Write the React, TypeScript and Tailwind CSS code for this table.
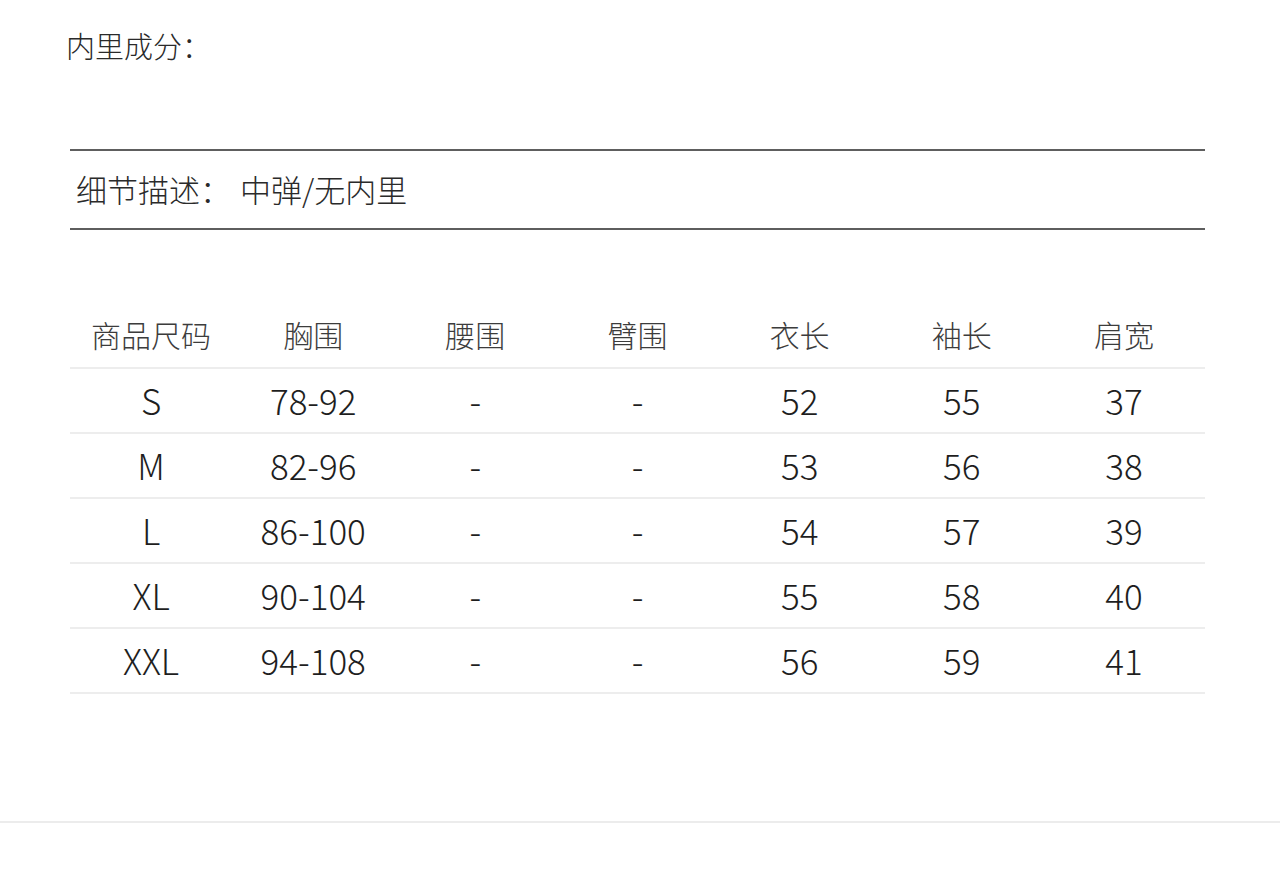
const headers = ["商品尺码", "胸围", "腰围", "臂围", "衣长", "袖长", "肩宽"];

const rows = [
	["S", "78-92", "-", "-", "52", "55", "37"],
	["M", "82-96", "-", "-", "53", "56", "38"],
	["L", "86-100", "-", "-", "54", "57", "39"],
	["XL", "90-104", "-", "-", "55", "58", "40"],
	["XXL", "94-108", "-", "-", "56", "59", "41"],
];

export default function App() {
	return (
		<div
			className="w-[1280px] h-[883px] bg-white text-[#222] font-light"
			style={{ fontFamily: '"Noto Sans CJK SC", "Noto Sans", sans-serif' }}
		>
			{/* Lining */}
			<div className="pt-[25px] pl-[66px] h-[65px] text-[29px] leading-[40px] text-[#2a2a2a]">
				内里成分：
			</div>

			<div className="ml-[70px] w-[1135px] mt-[84px]">
				{/* Detail */}
				<div className="h-[2px] bg-[#5e5e5e]" />
				<div className="h-[77px] flex items-center pl-[6px] text-[31px] text-[#2a2a2a]">
					<span>细节描述：</span>
					<span className="ml-[9px]">中弹/无内里</span>
				</div>
				<div className="h-[2px] bg-[#5e5e5e]" />

				{/* Size table */}
				<div className="mt-[74px]">
					<div className="grid grid-cols-7 h-[65px] pb-[4px] items-center border-b-2 border-[#ededed] text-[30px] text-[#3c3c3c]">
						{headers.map((h) => (
							<div key={h} className="text-center leading-none">
								{h}
							</div>
						))}
					</div>
					{rows.map((r) => (
						<div
							key={r[0]}
							className="grid grid-cols-7 h-[65px] pb-[2px] items-center border-b-2 border-[#ededed] text-[35px] text-[#1e1e1e]"
						>
							{r.map((c, i) => (
								<div key={i} className="text-center leading-none">
									{c}
								</div>
							))}
						</div>
					))}
				</div>
			</div>

			<div className="mt-[127px] h-[2px] bg-[#ececec]" />
		</div>
	);
}
